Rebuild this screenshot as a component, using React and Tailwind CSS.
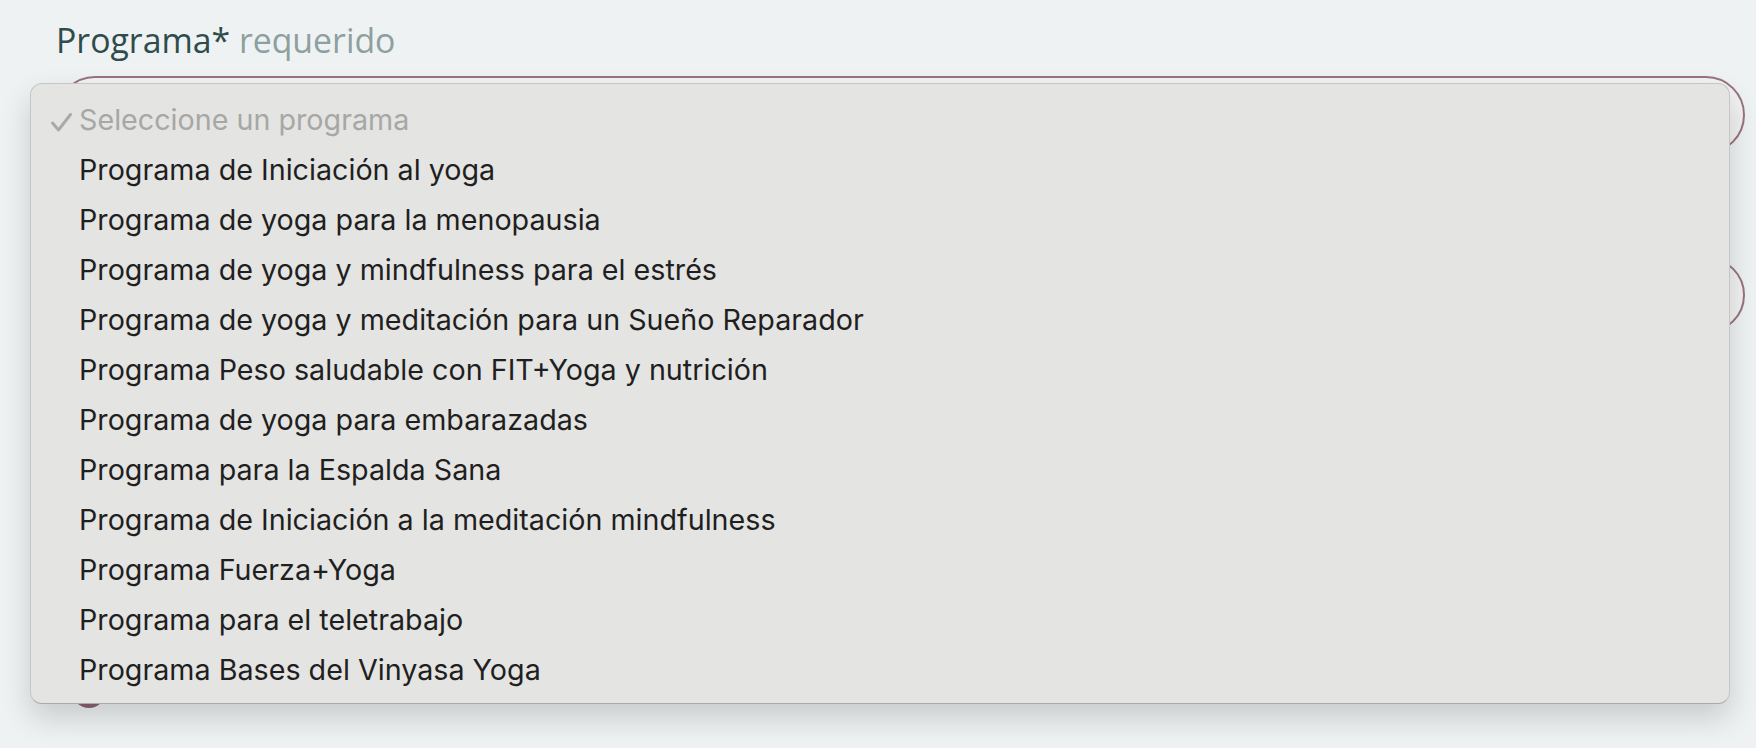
import React from 'react'

const programas = [
  'Programa de Iniciación al yoga',
  'Programa de yoga para la menopausia',
  'Programa de yoga y mindfulness para el estrés',
  'Programa de yoga y meditación para un Sueño Reparador',
  'Programa Peso saludable con FIT+Yoga y nutrición',
  'Programa de yoga para embarazadas',
  'Programa para la Espalda Sana',
  'Programa de Iniciación a la meditación mindfulness',
  'Programa Fuerza+Yoga',
  'Programa para el teletrabajo',
  'Programa Bases del Vinyasa Yoga',
]

const CheckMark = () => (
  <svg width="21" height="19" viewBox="0 0 21 19" fill="none" className="mt-[4px]">
    <path d="M1.5 10 L7.5 17 L19.5 1.5" stroke="#a9a9a7" strokeWidth="2.9" strokeLinecap="round" strokeLinejoin="round" />
  </svg>
)

const SelectMenu = () => (
  <div className="absolute left-[30px] top-[83px] w-[1700px] h-[621px] rounded-[12px] bg-[#e4e4e2] border border-[#c6c6c4] border-b-[#a9a9a7] shadow-[0_14px_30px_rgba(0,0,0,0.16)] pt-[11px] font-['Inter',sans-serif] text-[28.7px] z-10">
    <div className="flex items-center h-[50px] text-[#a7a7a5]">
      <span className="w-[48px] pl-[20px] flex items-center">
        <CheckMark />
      </span>
      <span>Seleccione un programa</span>
    </div>
    {programas.map((p) => (
      <div key={p} className="flex items-center h-[50px] pl-[48px] text-[#1f1f1f]">
        {p}
      </div>
    ))}
  </div>
)

export default function App() {
  return (
    <div className="relative w-[1756px] h-[748px] bg-[#eef2f3] overflow-hidden">
      <div className="pl-[56px] pr-[11px] pt-[20px] font-['Open_Sans',sans-serif]">
        <label className="block text-[33.8px] leading-[40px]">
          <span className="text-[#2e4c4b]">Programa*</span>{' '}
          <span className="text-[#8d9f9e]">requerido</span>
        </label>
        <div className="mt-[16px] h-[78px] rounded-full border-2 border-[#9a7282] bg-[#f2f2f2]" />
        <div className="mt-[103px] h-[76px] rounded-full border-2 border-[#9a7282] bg-[#f2f2f2]" />
        <div className="mt-[341px] ml-[16px] w-[34px] h-[34px] rounded-full bg-[#8c6272]" />
      </div>
      <SelectMenu />
    </div>
  )
}
